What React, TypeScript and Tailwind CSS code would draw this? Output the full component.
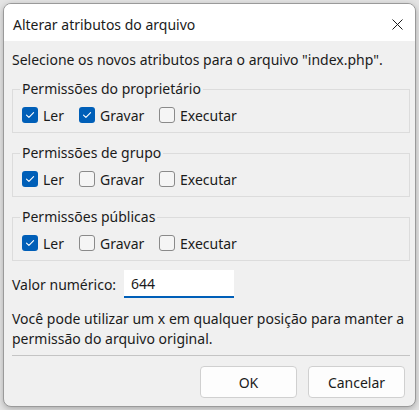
import React from 'react';

type Perm = { label: string; checked: boolean };

const groups: { title: string; perms: Perm[] }[] = [
  {
    title: 'Permissões do proprietário',
    perms: [
      { label: 'Ler', checked: true },
      { label: 'Gravar', checked: true },
      { label: 'Executar', checked: false },
    ],
  },
  {
    title: 'Permissões de grupo',
    perms: [
      { label: 'Ler', checked: true },
      { label: 'Gravar', checked: false },
      { label: 'Executar', checked: false },
    ],
  },
  {
    title: 'Permissões públicas',
    perms: [
      { label: 'Ler', checked: true },
      { label: 'Gravar', checked: false },
      { label: 'Executar', checked: false },
    ],
  },
];

function CheckBox({ checked }: { checked: boolean }) {
  if (checked) {
    return (
      <span className="flex h-[16px] w-[16px] shrink-0 items-center justify-center rounded-[3px] bg-[#005fb8]">
        <svg width="10" height="8" viewBox="0 0 10 8" fill="none">
          <path d="M1.5 4.2 L3.9 6.4 L8.6 1.6" stroke="white" strokeWidth="1.1" strokeLinecap="round" strokeLinejoin="round" />
        </svg>
      </span>
    );
  }
  return <span className="h-[16px] w-[16px] shrink-0 rounded-[3px] border border-[#8a8a8a] bg-[#f5f5f5]" />;
}

function Group({ title, perms }: { title: string; perms: Perm[] }) {
  return (
    <fieldset className="border border-[#dcdcdc] pb-[7px] pl-[7px]">
      <legend className="px-[2px] leading-[20px]">{title}</legend>
      <div className="ml-[2px] mt-[6px] flex h-[20px] items-center">
        {perms.map((p, i) => (
          <label
            key={p.label}
            className={
              'flex items-center gap-[5px] ' + (i === 0 ? 'w-[57px]' : i === 1 ? 'w-[80px]' : '')
            }
          >
            <CheckBox checked={p.checked} />
            <span>{p.label}</span>
          </label>
        ))}
      </div>
    </fieldset>
  );
}

export default function App() {
  return (
    <div
      className="h-[410px] w-[419px] bg-[#e4e4e4] pl-[3px] pt-[3px] text-[14px] text-[#1b1b1b]"
      style={{ fontFamily: '"Noto Sans", "Liberation Sans", sans-serif' }}
    >
      <div className="flex h-[404px] w-[413px] flex-col overflow-hidden rounded-[8px] border border-[#9a9a9a] bg-[#f0f0f0] shadow-[0_2px_6px_rgba(0,0,0,0.25)]">
        <div className="flex h-[37px] items-center justify-between bg-white pl-[9px] pr-[12px] pt-[4px]">
          <span>Alterar atributos do arquivo</span>
          <svg width="11" height="11" viewBox="0 0 11 11">
            <path d="M0.5 0.5 L10.5 10.5 M10.5 0.5 L0.5 10.5" stroke="#1b1b1b" strokeWidth="1" />
          </svg>
        </div>

        <div className="flex flex-col pl-[8px] pr-[5px]">
          <p className="mt-[9px] leading-[20px]">Selecione os novos atributos para o arquivo "index.php".</p>

          <div className="mt-[9px] flex flex-col gap-[10px]">
            {groups.map((g) => (
              <Group key={g.title} title={g.title} perms={g.perms} />
            ))}
          </div>

          <div className="mt-[9px] flex items-center">
            <span className="w-[112px]">Valor numérico:</span>
            <div className="flex h-[28px] w-[110px] items-center border-b-2 border-[#005fb8] bg-white pl-[7px]">
              644
            </div>
          </div>

          <p className="mt-[11px] whitespace-nowrap leading-[20px]">
            Você pode utilizar um x em qualquer posição para manter a
            <br />
            permissão do arquivo original.
          </p>

          <div className="mt-[6px] h-px bg-[#c4c4c4]" />

          <div className="mr-[5px] mt-[10px] flex justify-end gap-[11px]">
            <button className="h-[32px] w-[97px] rounded-[4px] border border-[#d0d0d0] bg-[#fdfdfd]">OK</button>
            <button className="h-[32px] w-[97px] rounded-[4px] border border-[#d0d0d0] bg-[#fdfdfd]">Cancelar</button>
          </div>
        </div>
      </div>
    </div>
  );
}
